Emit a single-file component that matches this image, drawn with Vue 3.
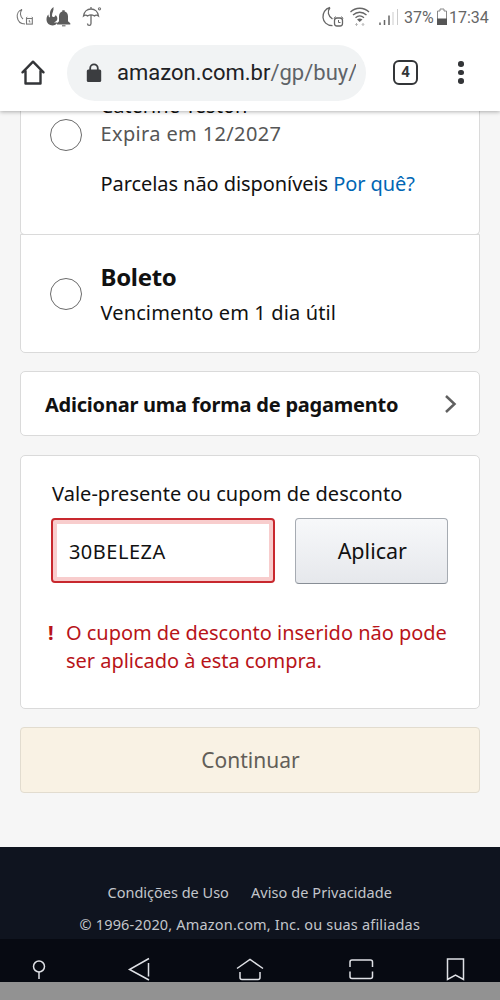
<script setup>
const footerLinks = [
  { label: 'Condições de Uso', cls: 'terms' },
  { label: 'Aviso de Privacidade', cls: 'privacy' }
]
</script>

<template>
  <div class="screen">
    <header class="chrome">
      <div class="status">
        <svg class="status-left" width="110" height="34" viewBox="0 0 110 34" fill="none" stroke="#777" stroke-width="1.1">
          <path d="M22 9.5C15 11.500 15.500 23.500 25 24M22 9.500C19.500 12 20 16.500 23 19" />
          <rect x="26.500" y="18.500" width="5.800" height="5.600" />
          <path d="M29.300 20v2h1.200M26 18l1.300-1M33 18l-1.300-1" stroke-width=".9" />
          <path d="M53.500 7c.5 3.500-1.500 6-1.500 8.500 0 2 3 2.200 3.600-.5 2.700 2.500 2.400 6-1.600 7.500h3.500c-2.500 5-11 3.500-11-3 0-2.500.8-4 2-5 0 2 .5 2.800 1.400 2.800.3-3.500-.9-7.300 3.600-10.300z" fill="#5c5c5c" stroke="none" />
          <path d="M57 24.500v-1.300l2-2v-5c0-2.600 1.600-4.300 3.300-4.800v-1.200h2.400v1.200c1.800.5 3.300 2.200 3.300 4.800v5l2.300 2v1.300z" fill="#5c5c5c" stroke="none" />
          <path d="M62 25.800h3.500" stroke="#666" />
          <path d="M83.500 16c.5-4 3.500-7 7.500-7s7 3 7.500 7c-1.500-1.300-3-1.300-4 0-2-1.300-5-1.300-7 0-1-1.300-2.500-1.300-4 0zM91 15v8.500c0 2.500-3.500 2.500-3.500 0M91 9V7" stroke="#6a6a6a" stroke-width="1.300" />
          <circle cx="99.500" cy="8.800" r="1.100" />
        </svg>
        <svg class="status-icons" width="82" height="34" viewBox="0 0 82 34" fill="none" stroke="#666" stroke-width="1.300">
          <path d="M10 7.500C0 10 .5 25.500 12.500 25.700M10 7.500c-3 4-2 8.500 2.500 11.500" />
          <rect x="14.500" y="18" width="8" height="8" rx="2.500" />
          <path d="M18.500 20v2.500h2M14 18.500l1.500-2M23 18.500l-1.500-2" stroke-width="1" />
          <path d="M30.500 12c5-5 13.500-5 18.500 0M33 15c4-3.700 9.500-3.700 13.500 0M35.500 17.800c2.500-2.200 6-2.200 8.500 0" />
          <path d="M37 19.500c2-1.300 3.500-1.300 5.500 0L39.700 22z" fill="#666" stroke="none" />
          <path d="M36.500 23v2.500M35.300 24.200l1.200 1.300 1.200-1.300M43 26v-2.500M41.800 24.800l1.200-1.200 1.200 1.200" stroke="#aaa" stroke-width=".9" />
          <path d="M60 22.500v2.500M64.500 20v5M69 15.500V25" stroke="#666" stroke-width="1.500" />
          <path d="M73 12v13M77.500 9v16" stroke="#ccc" stroke-width="1" />
        </svg>
        <span class="percent">37%</span>
        <svg class="battery" width="12" height="34" viewBox="0 0 12 34" fill="none">
          <path d="M4 11V9h4v2h2.500v13.500h-9V11z" stroke="#888" />
          <path d="M1 18.500h10V25H1z" fill="#555" />
        </svg>
        <span class="clock">17:34</span>
      </div>
      <div class="toolbar">
        <svg class="home" width="26" height="27" viewBox="0 0 26 27" fill="none" stroke="#333538" stroke-width="2.400" stroke-linejoin="round" stroke-linecap="round">
          <path d="M2.500 13.300L13 2.700l10.500 10.600M5.500 12v12.500h15V12" />
        </svg>
        <div class="address">
          <svg class="lock" width="16" height="20" viewBox="0 0 16 20">
            <path d="M4.200 8V5.200c0-5 7.600-5 7.600 0V8" fill="none" stroke="#3b3d40" stroke-width="1.800" />
            <rect x=".8" y="6.600" width="14.400" height="12.400" rx="1.500" fill="#3b3d40" />
          </svg>
          <div class="url"><b>amazon.com.br</b>/gp/buy/</div>
        </div>
        <div class="tabs">4</div>
        <div class="menu"><i></i><i></i><i></i></div>
      </div>
    </header>

    <main>
      <section class="card option-card">
        <div class="radio"></div>
        <div class="option">
          <div class="line name">Caterine Teston</div>
          <div class="line expiry">Expira em 12/2027</div>
          <div class="line installments">Parcelas não disponíveis <a>Por quê?</a></div>
        </div>
      </section>
      <section class="card boleto-card">
        <div class="radio"></div>
        <div class="option">
          <div class="boleto">Boleto</div>
          <div class="line due">Vencimento em 1 dia útil</div>
        </div>
      </section>

      <section class="card add-card">
        <span class="add">Adicionar uma forma de pagamento</span>
        <svg width="14" height="20" viewBox="0 0 14 20" fill="none" stroke="#606060" stroke-width="2.500"><path d="M2 2l8.500 8L2 18" /></svg>
      </section>

      <section class="card coupon-card">
        <div class="line coupon-label">Vale-presente ou cupom de desconto</div>
        <div class="coupon-row">
          <div class="input">30BELEZA</div>
          <div class="apply">Aplicar</div>
        </div>
        <div class="error">
          <span class="bang">!</span>
          <div>
            <div class="err1">O cupom de desconto inserido não pode</div>
            <div class="err2">ser aplicado à esta compra.</div>
          </div>
        </div>
      </section>

      <div class="continue">Continuar</div>
    </main>

    <footer>
      <div class="links">
        <span v-for="l in footerLinks" :key="l.label" :class="l.cls">{{ l.label }}</span>
      </div>
      <div class="copyright">© 1996-2020, Amazon.com, Inc. ou suas afiliadas</div>
    </footer>
    <nav>
      <svg width="500" height="43" viewBox="0 0 500 43" fill="none" stroke="#dfe1e6" stroke-width="1.500">
        <circle cx="39" cy="27.500" r="5.500" /><path d="M39 33V40" />
        <path d="M149 19.500L129.500 30.500 149 41M148.500 24v13.500" />
        <path d="M237 29.500L250 20.500l13 9M240 33v5.500q0 2 2 2h16q2 0 2-2V33" />
        <path d="M350 28v-5q0-2 2-2h18.500q2 0 2 2v5M350 32.500v5q0 2 2 2h18.500q2 0 2-2v-5" />
        <path d="M447.500 20h16v20.500l-8-4.500-8 4.500z" />
      </svg>
    </nav>
    <div class="strip"></div>
  </div>
</template>

<style>
body { margin: 0; background: #f6f6f6; }
</style>

<style scoped>
* { box-sizing: border-box; }
.screen {
  width: 500px; height: 1000px; overflow: hidden;
  display: flex; flex-direction: column;
  font-family: "Noto Sans", sans-serif; font-size: 20px; color: #111;
  background: #f6f6f6; white-space: nowrap;
}
.chrome {
  height: 111px; flex: none; background: #fff; position: relative; z-index: 2;
  font-family: Roboto, sans-serif;
  box-shadow: 0 1px 4px rgba(0, 0, 0, .3);
}
.status { height: 34px; display: flex; align-items: center; color: #666; font-size: 16px; }
.status svg { flex: none; }
.status-icons { margin-left: 210px; }
.percent { width: 32px; margin-left: 2px; }
.battery { margin-left: 0; }
.clock { margin-left: 1px; }
.toolbar { height: 77px; display: flex; align-items: center; padding-left: 20px; }
.home { margin-top: -1px; flex: none; }
.address {
  width: 299px; height: 56px; margin-left: 21px; border-radius: 28px; background: #f1f3f4;
  display: flex; align-items: center; padding-left: 19px; flex: none;
}
.url { margin-left: 15px; width: 239px; overflow: hidden; font-size: 22px; line-height: 30px; color: #5f6368; }
.url b { font-weight: 400; color: #202124; }
.tabs {
  width: 25px; height: 25px; margin-left: 27px; border: 2.500px solid #333538; border-radius: 6px;
  font-size: 15px; font-weight: 700; line-height: 21px; text-align: center; color: #333538;
}
.menu { margin-left: 40px; display: flex; flex-direction: column; gap: 3px; }
.menu i { width: 5.600px; height: 5.600px; border-radius: 50%; background: #333538; }

main { height: 736px; flex: none; padding: 0 20px; display: flex; flex-direction: column; }
.card { background: #fff; border: 1px solid #dadada; border-radius: 5px; width: 460px; flex: none; }
.option-card { height: 124px; display: flex; border-top: 0; border-top-left-radius: 0; border-top-right-radius: 0; }
.radio { width: 32px; height: 32px; border: 1px solid #6b6b6b; border-radius: 50%; margin-left: 29px; flex: none; }
.option-card .radio { margin-top: 8px; }
.option { margin-left: 18.500px; }
.option-card .option { margin-top: -19px; }
.line { line-height: 28px; }
.expiry { color: #565656; letter-spacing: .36px; }
.installments { margin-top: 22px; letter-spacing: -.07px; }
.expiry { position: static; }
a { color: #0066b4; }
.boleto-card { height: 119px; margin-top: -1px; border-top-left-radius: 0; border-top-right-radius: 0; display: flex; }
.boleto-card .radio { margin-top: 43px; }
.boleto { font-size: 24px; font-weight: 700; line-height: 32px; margin-top: 26px; letter-spacing: -.3px; }
.due { margin-top: 6px; letter-spacing: .13px; }
.add-card { height: 65px; margin-top: 18px; display: flex; align-items: center; justify-content: space-between; padding: 0 21px 0 24px; }
.add { font-weight: 700; letter-spacing: -.23px; padding-top: 2px; }
.coupon-card { height: 254px; margin-top: 19px; padding: 24px 31px 0; }
.coupon-label { letter-spacing: .03px; }
.coupon-row { display: flex; margin-top: 10px; gap: 20px; margin-left: -.6px; }
.input {
  width: 224px; height: 65px; border: 2px solid #c8282e; border-radius: 4px; box-shadow: inset 0 0 0 4px #f8cdcd;
  padding-left: 15.500px; line-height: 63px; letter-spacing: .5px;
}
.apply {
  width: 154px; height: 66px; border: 1px solid #a6abb2; border-bottom-color: #888e96; border-radius: 4px;
  background: linear-gradient(#f7f8fa, #e6e8ec); text-align: center; font-size: 21.500px; line-height: 63px; padding-left: 2px;
}
.error { display: flex; color: #b81419; line-height: 28px; margin-top: 35px; margin-left: -5px; letter-spacing: -.03px; }
.bang { width: 19px; font-weight: 700; padding-left: 1px; }
.continue {
  width: 460px; height: 66px; margin-top: 18px; flex: none; border: 1px solid #e2dccf; border-radius: 4px;
  background: #f9f2e4; color: #625e58; text-align: center; font-size: 21px; line-height: 64px; padding-left: 1px;
}
footer { height: 92px; flex: none; background: #0f141f; color: #c3c6cb; font-size: 14.500px; padding-top: 34px; }
.links { display: flex; gap: 22px; padding-left: 107.500px; line-height: 22px; }
.privacy { letter-spacing: .08px; }
.copyright { padding-left: 79.500px; line-height: 22px; margin-top: 10px; letter-spacing: .18px; }
nav { height: 43px; flex: none; background: #070a12; }
nav svg { display: block; }
.strip { height: 18px; flex: none; background: #929292; }
</style>
